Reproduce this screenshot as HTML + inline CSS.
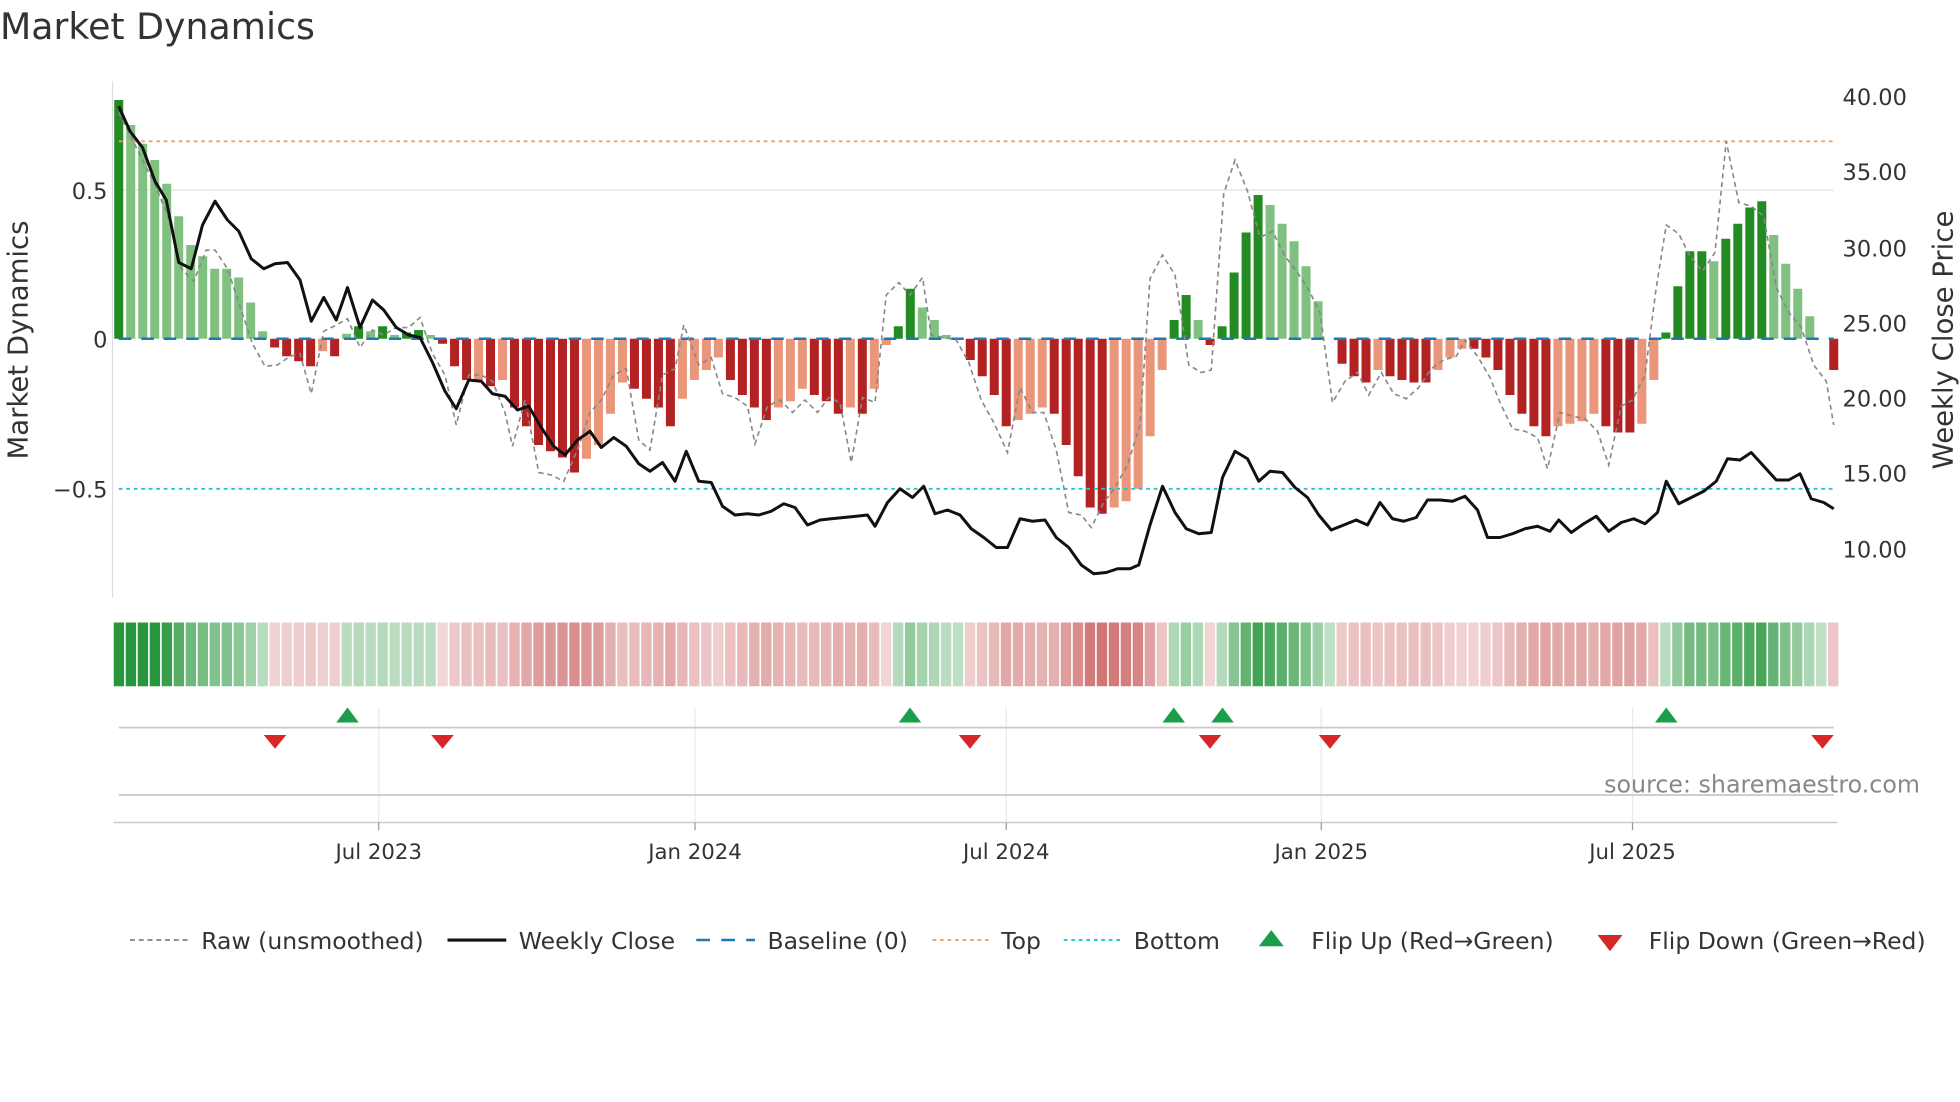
<!DOCTYPE html>
<html><head><meta charset="utf-8"><style>
html,body{margin:0;padding:0;background:#fff;width:1960px;height:1102px;overflow:hidden}
svg{display:block;font-family:"DejaVu Sans","Liberation Sans",sans-serif}
</style></head><body>
<svg id="s" width="1960" height="1102" viewBox="0 0 1568 881.6" xmlns="http://www.w3.org/2000/svg">
<rect width="1568" height="882" fill="#fff"/>
<text x="0" y="31" font-size="29" fill="#333">Market Dynamics</text>
<line x1="90" y1="65" x2="90" y2="478" stroke="#ddd" stroke-width="1"/>
<line x1="95" y1="152" x2="1467" y2="152" stroke="#e6e6e6" stroke-width="1.2"/>
<g font-size="18" fill="#333">
<text x="86" y="159" text-anchor="end">0.5</text>
<text x="86" y="278" text-anchor="end">0</text>
<text x="86" y="398" text-anchor="end">−0.5</text>
<text x="1474" y="84">40.00</text>
<text x="1474" y="144">35.00</text>
<text x="1474" y="205">30.00</text>
<text x="1474" y="265">25.00</text>
<text x="1474" y="325">20.00</text>
<text x="1474" y="385">15.00</text>
<text x="1474" y="446">10.00</text>
</g>
<text transform="translate(22,272) rotate(-90)" font-size="22" fill="#333" text-anchor="middle">Market Dynamics</text>
<text transform="translate(1562,272) rotate(-90)" font-size="22" fill="#333" text-anchor="middle">Weekly Close Price</text>
<g id="bars"></g>
<g id="heat"></g>
<line x1="95" y1="113" x2="1467" y2="113" stroke="#f0a060" stroke-width="1.5" stroke-dasharray="3,3"/>
<line x1="95" y1="391" x2="1467" y2="391" stroke="#22c4d4" stroke-width="1.5" stroke-dasharray="3,3"/>
<line x1="95" y1="271" x2="1467" y2="271" stroke="#1f77b4" stroke-width="2" stroke-dasharray="10,8"/>
<polyline id="raw" fill="none" stroke="#888" stroke-width="1.3" stroke-dasharray="4,3"/>
<polyline id="price" fill="none" stroke="#111" stroke-width="2.4" stroke-linejoin="round"/>
<g stroke="#eaeaea" stroke-width="1">
<line x1="303" y1="566" x2="303" y2="658"/><line x1="556" y1="566" x2="556" y2="658"/><line x1="805" y1="566" x2="805" y2="658"/><line x1="1057" y1="566" x2="1057" y2="658"/><line x1="1306" y1="566" x2="1306" y2="658"/>
</g>
<line x1="95" y1="582" x2="1467" y2="582" stroke="#ccc" stroke-width="1.5"/>
<line x1="95" y1="636" x2="1467" y2="636" stroke="#ccc" stroke-width="1.5"/>
<line x1="91" y1="658" x2="1470" y2="658" stroke="#ccc" stroke-width="1.2"/>
<g stroke="#999"><line x1="303" y1="658" x2="303" y2="664"/><line x1="556" y1="658" x2="556" y2="664"/><line x1="805" y1="658" x2="805" y2="664"/><line x1="1057" y1="658" x2="1057" y2="664"/><line x1="1306" y1="658" x2="1306" y2="664"/></g>
<g id="flips"></g>
<text x="1536" y="634" font-size="19" fill="#888" text-anchor="end">source: sharemaestro.com</text>
<g font-size="17" fill="#333" text-anchor="middle">
<text x="303" y="687">Jul 2023</text><text x="556" y="687">Jan 2024</text><text x="805" y="687">Jul 2024</text><text x="1057" y="687">Jan 2025</text><text x="1306" y="687">Jul 2025</text>
</g>
<g font-size="18.8" fill="#333">
<line x1="104" y1="752" x2="150" y2="752" stroke="#888" stroke-width="1.5" stroke-dasharray="4,3"/><text x="161" y="759">Raw (unsmoothed)</text>
<line x1="358" y1="752" x2="405" y2="752" stroke="#111" stroke-width="2.5"/><text x="415" y="759">Weekly Close</text>
<line x1="557" y1="752" x2="604" y2="752" stroke="#1f77b4" stroke-width="2" stroke-dasharray="11,9"/><text x="614" y="759">Baseline (0)</text>
<line x1="746" y1="752" x2="792" y2="752" stroke="#f0a060" stroke-width="1.5" stroke-dasharray="3,3"/><text x="801" y="759">Top</text>
<line x1="851" y1="752" x2="897" y2="752" stroke="#22c4d4" stroke-width="1.5" stroke-dasharray="3,3"/><text x="907" y="759">Bottom</text>
<polygon points="1017,744 1027,757 1007,757" fill="#1a9e4a"/><text x="1049" y="759">Flip Up (Red→Green)</text>
<polygon points="1278,748 1298,748 1288,761" fill="#d62728"/><text x="1319" y="759">Flip Down (Green→Red)</text>
</g>
</svg>
<script>
var NS="http://www.w3.org/2000/svg";
function el(t,a,p){var e=document.createElementNS(NS,t);for(var k in a)e.setAttribute(k,a[k]);document.getElementById(p).appendChild(e);return e;}
var B=[[191,1],[171,0],[156,0],[143,0],[124,0],[98,0],[75,0],[66,0],[56,0],[56,0],[49,0],[29,0],[6,0],[-7,1],[-14,1],[-18,1],[-22,1],[-10,0],[-14,1],[4,0],[10,1],[6,0],[10,1],[3,0],[5,1],[7,1],[3,0],[-4,1],[-22,1],[-33,1],[-33,0],[-38,1],[-33,0],[-55,1],[-70,1],[-85,1],[-90,1],[-95,1],[-107,1],[-96,0],[-85,0],[-60,0],[-35,0],[-40,1],[-48,1],[-55,1],[-70,1],[-48,0],[-33,0],[-25,0],[-15,0],[-33,1],[-45,1],[-55,1],[-65,1],[-55,0],[-50,0],[-40,0],[-45,1],[-50,1],[-60,1],[-55,0],[-60,1],[-40,0],[-5,0],[10,1],[40,1],[25,0],[15,0],[3,0],[0,0],[-17,1],[-30,1],[-45,1],[-70,1],[-65,0],[-60,0],[-55,0],[-60,1],[-85,1],[-110,1],[-135,1],[-140,1],[-135,0],[-130,0],[-120,0],[-78,0],[-25,0],[15,1],[35,1],[15,0],[-5,1],[10,1],[53,1],[85,1],[115,1],[107,0],[92,0],[78,0],[58,0],[30,0],[0,0],[-20,1],[-30,1],[-35,1],[-25,0],[-30,1],[-33,1],[-35,1],[-35,1],[-25,0],[-15,0],[-8,0],[-8,1],[-15,1],[-25,1],[-45,1],[-60,1],[-70,1],[-78,1],[-70,0],[-68,0],[-66,0],[-60,0],[-70,1],[-75,1],[-75,1],[-68,0],[-33,0],[5,1],[42,1],[70,1],[70,1],[62,0],[80,1],[92,1],[105,1],[110,1],[83,0],[60,0],[40,0],[18,0],[0,0],[-25,1]];
var n=B.length,x0=95,x1=1467,dx=(x1-x0)/(n-1);
var hx0=91,hw=(1472-91)/n;
B.forEach(function(b,i){var v=b[0],x=x0+i*dx-3.6;
 if(v!=0){var c=v>0?(b[1]?"#228b22":"#80c080"):(b[1]?"#b22222":"#e9967a");
 el("rect",{x:x,y:v>0?271-v:271,width:7.2,height:Math.abs(v),fill:c},"bars");}
 var m=Math.min(1,Math.abs(v)/140),col;
 if(v>=0){var a=0.3+0.7*m;col="rgba(40,150,60,"+a.toFixed(2)+")";}
 else{var a=0.2+0.5*m;col="rgba(190,60,60,"+a.toFixed(2)+")";}
 el("rect",{x:hx0+i*hw,y:498,width:hw-1.3,height:51,fill:col},"heat");
});
var P="95,85 104,105 114,118 124,145 133,160 143,210 153,215 162,180 172,161 182,176 191,185 201,207 211,215 220,211 230,210 240,224 249,257 259,238 269,256 278,230 288,262 298,240 307,248 317,262 327,268 336,270 346,290 356,313 365,327 375,304 385,305 394,315 404,317 414,328 423,325 433,342 443,357 452,364 462,352 472,345 481,358 491,350 501,357 511,371 520,377 530,370 540,385 549,361 559,385 569,386 578,405 588,412 598,411 607,412 617,409 627,403 636,406 646,420 656,416 665,415 675,414 685,413 694,412 700,421 710,402 720,391 730,398 739,389 748,411 758,408 768,412 777,423 787,430 797,438 806,438 816,415 826,417 836,416 845,430 855,438 865,452 875,459 885,458 894,455 904,455 911,452 920,420 930,389 940,410 949,423 959,427 969,426 978,382 988,361 998,367 1007,385 1016,377 1026,378 1036,390 1046,398 1055,412 1065,424 1075,420 1085,416 1094,420 1104,402 1114,415 1123,417 1133,414 1142,400 1152,400 1162,401 1172,397 1182,408 1190,430 1200,430 1210,427 1220,423 1230,421 1240,425 1247,416 1257,426 1267,419 1277,413 1287,425 1297,418 1307,415 1316,419 1326,410 1333,385 1343,403 1353,398 1363,393 1373,385 1382,367 1392,368 1401,362 1411,373 1421,384 1431,384 1440,379 1449,399 1459,402 1467,407";
document.getElementById("price").setAttribute("points",P);
var R="95,90 105,110 115,130 125,150 135,175 145,215 155,225 165,200 172,200 182,215 192,245 202,275 212,293 222,292 232,285 240,283 249,315 259,265 269,260 278,255 288,278 298,264 307,268 317,262 327,262 336,254 346,283 356,300 365,340 375,300 385,300 394,305 404,330 410,357 420,320 431,378 441,380 451,385 462,360 472,330 481,320 491,300 501,295 511,352 520,360 530,300 540,295 547,260 559,292 569,286 578,315 588,318 598,325 604,355 614,325 624,320 634,330 644,320 654,330 663,318 672,322 681,370 690,318 700,322 709,236 719,226 728,236 738,222 745,268 755,270 765,272 775,290 785,320 795,338 806,362 816,310 826,330 835,330 845,360 855,410 865,412 873,422 883,402 892,390 902,372 912,340 920,223 930,204 940,220 951,292 961,298 969,296 979,155 988,128 998,153 1008,190 1018,185 1028,205 1038,218 1047,232 1056,250 1066,322 1076,305 1086,298 1095,316 1105,298 1115,315 1125,319 1135,310 1145,295 1155,288 1165,285 1172,272 1182,285 1192,302 1200,322 1210,343 1220,345 1230,350 1238,375 1248,330 1258,333 1268,335 1278,345 1287,372 1297,325 1306,320 1316,300 1325,230 1333,180 1343,187 1352,205 1362,217 1372,202 1381,113 1391,162 1401,165 1411,173 1421,230 1431,250 1441,262 1451,292 1461,305 1467,340";
document.getElementById("raw").setAttribute("points",R);
[278,728,939,978,1333].forEach(function(x){el("polygon",{points:(x)+",566 "+(x+9)+",578 "+(x-9)+",578",fill:"#1a9e4a"},"flips");});
[220,354,776,968,1064,1458].forEach(function(x){el("polygon",{points:(x-9)+",588 "+(x+9)+",588 "+x+",599",fill:"#d62728"},"flips");});
</script>
</body></html>
